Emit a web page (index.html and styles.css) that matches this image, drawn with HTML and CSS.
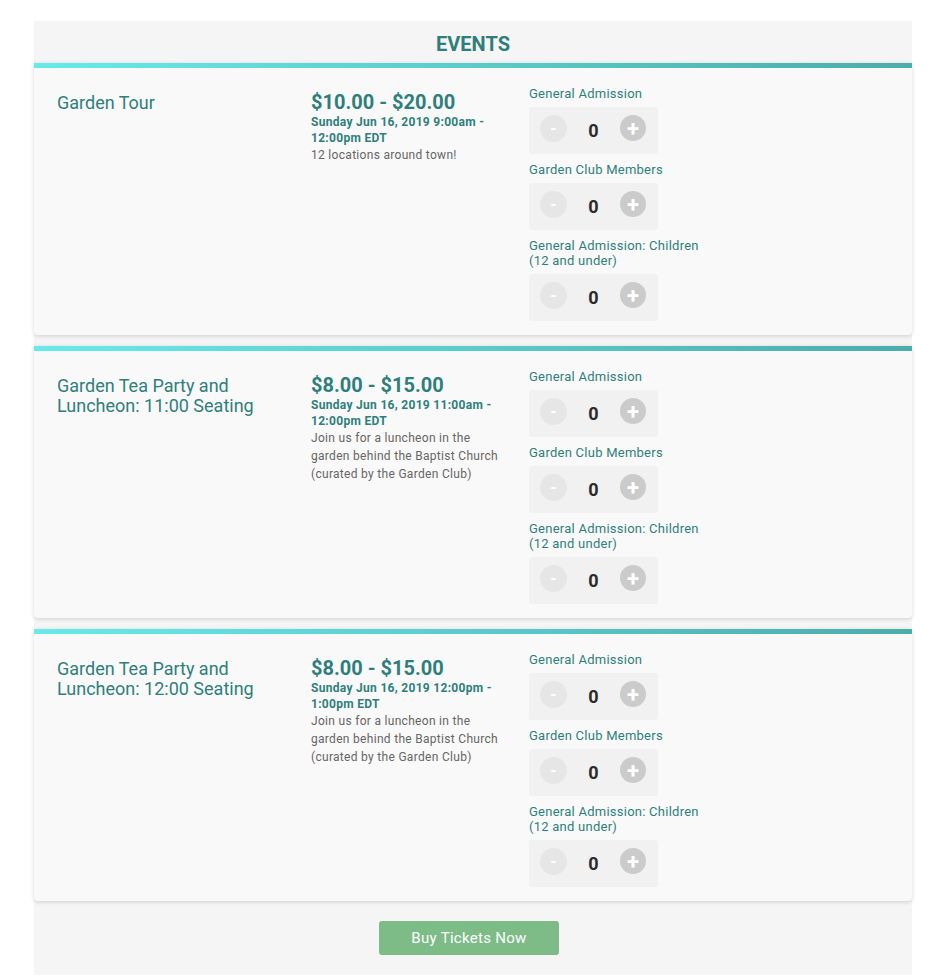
FILE: index.html
```html
<!DOCTYPE html>
<html>
<head>
<meta charset="utf-8">
<link rel="stylesheet" href="styles.css">
</head>
<body>
<div class="events">
  <h2 class="events-title">EVENTS</h2>

  <div class="card">
    <div class="col-title">Garden Tour</div>
    <div class="col-info">
      <div class="price">$10.00 - $20.00</div>
      <div class="date">Sunday Jun 16, 2019 9:00am - 12:00pm EDT</div>
      <div class="desc">12 locations around town!</div>
    </div>
    <div class="col-tickets">
      <div class="ticket">
        <div class="ticket-label">General Admission</div>
        <div class="counter"><span class="btn minus">-</span><span class="qty">0</span><span class="btn plus">+</span></div>
      </div>
      <div class="ticket">
        <div class="ticket-label">Garden Club Members</div>
        <div class="counter"><span class="btn minus">-</span><span class="qty">0</span><span class="btn plus">+</span></div>
      </div>
      <div class="ticket">
        <div class="ticket-label">General Admission: Children (12 and under)</div>
        <div class="counter"><span class="btn minus">-</span><span class="qty">0</span><span class="btn plus">+</span></div>
      </div>
    </div>
  </div>

  <div class="card">
    <div class="col-title">Garden Tea Party and Luncheon: 11:00 Seating</div>
    <div class="col-info">
      <div class="price">$8.00 - $15.00</div>
      <div class="date">Sunday Jun 16, 2019 11:00am - 12:00pm EDT</div>
      <div class="desc">Join us for a luncheon in the garden behind the Baptist Church (curated by the Garden Club)</div>
    </div>
    <div class="col-tickets">
      <div class="ticket">
        <div class="ticket-label">General Admission</div>
        <div class="counter"><span class="btn minus">-</span><span class="qty">0</span><span class="btn plus">+</span></div>
      </div>
      <div class="ticket">
        <div class="ticket-label">Garden Club Members</div>
        <div class="counter"><span class="btn minus">-</span><span class="qty">0</span><span class="btn plus">+</span></div>
      </div>
      <div class="ticket">
        <div class="ticket-label">General Admission: Children (12 and under)</div>
        <div class="counter"><span class="btn minus">-</span><span class="qty">0</span><span class="btn plus">+</span></div>
      </div>
    </div>
  </div>

  <div class="card">
    <div class="col-title">Garden Tea Party and Luncheon: 12:00 Seating</div>
    <div class="col-info">
      <div class="price">$8.00 - $15.00</div>
      <div class="date">Sunday Jun 16, 2019 12:00pm - 1:00pm EDT</div>
      <div class="desc">Join us for a luncheon in the garden behind the Baptist Church (curated by the Garden Club)</div>
    </div>
    <div class="col-tickets">
      <div class="ticket">
        <div class="ticket-label">General Admission</div>
        <div class="counter"><span class="btn minus">-</span><span class="qty">0</span><span class="btn plus">+</span></div>
      </div>
      <div class="ticket">
        <div class="ticket-label">Garden Club Members</div>
        <div class="counter"><span class="btn minus">-</span><span class="qty">0</span><span class="btn plus">+</span></div>
      </div>
      <div class="ticket">
        <div class="ticket-label">General Admission: Children (12 and under)</div>
        <div class="counter"><span class="btn minus">-</span><span class="qty">0</span><span class="btn plus">+</span></div>
      </div>
    </div>
  </div>

  <div class="actions">
    <button class="buy">Buy Tickets Now</button>
  </div>
</div>
</body>
</html>
```

FILE: styles.css
```css
html, body {
  margin: 0;
  padding: 0;
  background: #ffffff;
  font-family: Roboto, "Liberation Sans", sans-serif;
}

.events {
  width: 878px;
  margin: 21px 0 0 34px;
  background: #f5f5f5;
  padding-bottom: 20px;
}

.events-title {
  margin: 0;
  height: 42px;
  line-height: 46px;
  text-align: center;
  font-size: 20px;
  font-weight: 700;
  color: #2e7f7c;
}

.card {
  display: grid;
  grid-template-columns: 254px 218px 1fr;
  padding: 5px 23px 14px 23px;
  margin-bottom: 11px;
  background: linear-gradient(to right, #68eaea, #4cadaa) top left / 100% 5px no-repeat, #f9f9f9;
  border-radius: 0 0 4px 4px;
  box-shadow: 0 1px 4px rgba(0, 0, 0, 0.16);
}

.col-title {
  padding-top: 25px;
  padding-right: 30px;
  font-size: 18px;
  line-height: 20px;
  color: #2e7f7c;
}

.col-info {
  padding-top: 22px;
  padding-right: 26px;
}

.price {
  font-size: 20px;
  line-height: 24px;
  font-weight: 700;
  color: #2e7f7c;
}

.date {
  font-size: 12px;
  line-height: 16px;
  font-weight: 700;
  letter-spacing: 0.3px;
  color: #2e7f7c;
}

.desc {
  font-size: 12px;
  line-height: 18px;
  letter-spacing: 0.3px;
  color: #666666;
}

.col-tickets {
  padding-top: 18px;
}

.ticket {
  margin-bottom: 8px;
}

.ticket:last-child {
  margin-bottom: 0;
}

.ticket-label {
  width: 180px;
  font-size: 13px;
  line-height: 15px;
  letter-spacing: 0.25px;
  color: #2e7f7c;
  margin-bottom: 6px;
}

.counter {
  display: flex;
  align-items: flex-start;
  box-sizing: border-box;
  width: 129px;
  height: 47px;
  padding: 8px 12px 0 11px;
  background: #f1f1f1;
  border-radius: 3px;
}

.btn {
  display: flex;
  align-items: center;
  justify-content: center;
  border-radius: 50%;
  color: #ffffff;
  font-weight: 700;
}

.minus {
  width: 27px;
  height: 27px;
  background: #e6e6e6;
  font-size: 16px;
}

.plus {
  width: 26px;
  height: 26px;
  background: #cbcbcb;
  font-size: 22px;
}

.qty {
  flex: 1;
  align-self: center;
  margin-top: -9px;
  text-align: center;
  font-size: 18px;
  font-weight: 700;
  color: #2b2b2b;
}

.actions {
  display: flex;
  justify-content: center;
  padding: 9px 8px 0 0;
}

.buy {
  width: 180px;
  height: 34px;
  border: none;
  border-radius: 3px;
  background: #7dbb87;
  color: #ffffff;
  font-family: Roboto, "Liberation Sans", sans-serif;
  font-size: 15px;
  font-weight: 400;
  letter-spacing: 0.3px;
}
```
